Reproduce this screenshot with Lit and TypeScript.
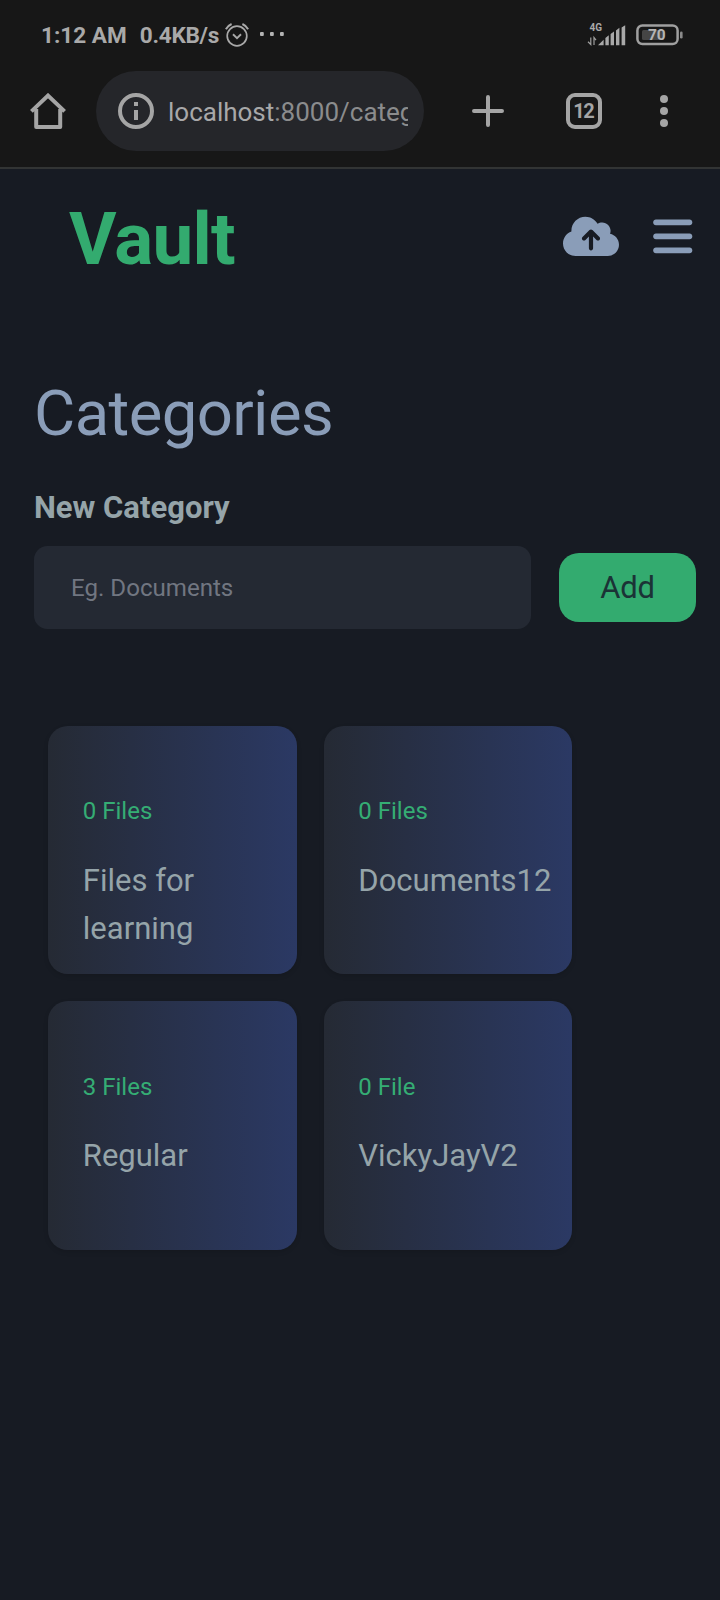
import { LitElement, html, css } from "lit";
import { customElement, property } from "lit/decorators.js";

@customElement("status-bar")
class StatusBar extends LitElement {
  static styles = css`
    :host { display: flex; align-items: center; height: 70px; padding: 0 37px 0 41px; color: #a9a9a9; }
    .time, .rate { padding-top: 1px; font-weight: 700; font-size: 22.6px; line-height: 30px; white-space: pre; }
    .rate { margin-left: 13px; letter-spacing: -0.3px; }
    .alarm { margin-left: 6px; }
    .more { margin-left: 10px; }
    .spacer { flex: 1; }
    .signal { margin-right: 10px; }
    svg { display: block; flex: none; }
    .tiny { font: 700 10px Roboto, sans-serif; }
    .level { font: 700 15.5px Roboto, sans-serif; }
  `;
  render() {
    return html`
      <span class="time">1:12 AM</span>
      <span class="rate">0.4KB/s</span>
      <svg class="alarm" width="24" height="26" viewBox="0 0 24 26" fill="none" stroke="#a9a9a9" stroke-width="1.7">
        <circle cx="12" cy="14" r="9.8" />
        <path d="M.9 7.200A12 12 0 0 1 6.600 2M23.100 7.200A12 12 0 0 0 17.400 2" stroke-width="2" />
        <path d="M8 12.300l4 3.800 4-3.800" stroke-width="1.9" />
      </svg>
      <svg class="more" width="26" height="6" viewBox="0 0 26 6" fill="#b4b4b4">
        <rect x="1" y="0" width="3.8" height="4" rx="1" /><rect x="11" y="0" width="3.8" height="4" rx="1" /><rect x="21" y="0" width="3.8" height="4" rx="1" />
      </svg>
      <span class="spacer"></span>
      <svg class="signal" width="39" height="24" viewBox="0 0 39 24" fill="#a9a9a9">
        <text class="tiny" x="2.6" y="8.2">4G</text>
        <path d="M3.800 14.500V21.500L1 18.800M7 22v-7.500L9 17.200" fill="none" stroke="#a0a0a0" stroke-width="1.2" />
        <path d="M11 22.200h5.600v-5.400z" />
        <path d="M18.400 22.200V15l3.400-2.800v10zM23.600 22.200V11l3.400-2.400v13.600zM29 22.200V7.400l3.400-2.600v17.400zM34.600 22.200V4.400l3.600-2.200v20z" />
      </svg>
      <svg width="47" height="22" viewBox="0 0 47 22">
        <rect x="1.4" y="1.4" width="40.2" height="18.6" rx="5" fill="none" stroke="#a0a0a0" stroke-width="2.5" />
        <rect x="6" y="6" width="22" height="10" rx="1.5" fill="#454545" />
        <rect x="44" y="7.5" width="2.6" height="7" rx="1.3" fill="#8a8a8a" />
        <text class="level" x="20.8" y="16.2" text-anchor="middle" fill="#b4b4b4">70</text>
      </svg>
    `;
  }
}

@customElement("browser-bar")
class BrowserBar extends LitElement {
  static styles = css`
    :host { display: flex; align-items: center; height: 80px; padding: 1px 48px 16px 30px; border-bottom: 2px solid #323434; color: #a5a5a5; }
    svg { display: block; flex: none; }
    .pill { display: flex; align-items: center; box-sizing: border-box; width: 328px; height: 80px; margin-left: 30px; padding: 0 16px 0 22px; border-radius: 40px; background: #25262a; }
    .url { margin-left: 14px; padding-top: 2px; flex: 1; overflow: hidden; white-space: nowrap; font-size: 26px; line-height: 40px; color: #8b8c8d; }
    .host { color: #a8a8a9; }
    .plus { margin-left: 48px; }
    .tabs { display: grid; place-items: center; box-sizing: border-box; width: 36px; height: 36px; margin-left: 62px; border: 4px solid #a5a5a5; border-radius: 9px; font-weight: 700; font-size: 20px; line-height: 28px; letter-spacing: -1.6px; text-indent: -1.6px; }
    .menu { margin-left: 58px; }
  `;
  render() {
    return html`
      <svg width="36" height="36" viewBox="0 0 36 36" fill="none" stroke="#a5a5a5" stroke-width="4" stroke-linejoin="round">
        <path d="M6.200 16v18h24V16" />
        <path d="M1.400 18.400L18 2.600l16.600 15.800" stroke-linejoin="miter" />
      </svg>
      <div class="pill">
        <svg width="36" height="36" viewBox="0 0 36 36">
          <circle cx="18" cy="18" r="16" fill="none" stroke="#a5a5a5" stroke-width="4" />
          <path d="M16 9h4v4h-4zM16 17h4v10h-4z" fill="#a5a5a5" />
        </svg>
        <div class="url"><span class="host">localhost</span>:8000/categories</div>
      </div>
      <svg class="plus" width="32" height="32" viewBox="0 0 32 32" stroke="#a5a5a5" stroke-width="4" stroke-linecap="round">
        <path d="M16 2v28M2 16h28" />
      </svg>
      <div class="tabs">12</div>
      <svg class="menu" width="8" height="32" viewBox="0 0 8 32" fill="#a5a5a5">
        <circle cx="4" cy="4" r="4" /><circle cx="4" cy="16" r="4" /><circle cx="4" cy="28" r="4" />
      </svg>
    `;
  }
}

@customElement("vault-header")
class VaultHeader extends LitElement {
  static styles = css`
    :host { display: flex; align-items: center; height: 135px; padding: 0 27.2px 0 69px; }
    .brand { flex: 1; padding-top: 5px; font-weight: 700; font-size: 72.8px; line-height: 80px; letter-spacing: -0.7px; color: #33ab6f; }
    svg { display: block; fill: #8a9db8; }
    .bars { margin-left: 34.3px; }
  `;
  render() {
    return html`
      <div class="brand">Vault</div>
      <svg width="56" height="44.8" viewBox="0 0 640 512"><path d="M144 480C64.500 480 0 415.500 0 336c0-62.800 40.200-116.200 96.200-135.900c-.1-2.700-.2-5.400-.2-8.100c0-88.400 71.600-160 160-160c59.300 0 111 32.200 138.700 80.200C409.900 102 428.300 96 448 96c53 0 96 43 96 96c0 12.200-2.300 23.800-6.400 34.600C596 238.400 640 290.100 640 352c0 70.700-57.300 128-128 128H144zm79-217c-9.400 9.400-9.400 24.600 0 33.900s24.600 9.400 33.900 0l39-39V392c0 13.300 10.700 24 24 24s24-10.700 24-24V257.900l39 39c9.400 9.400 24.600 9.400 33.900 0s9.400-24.600 0-33.900l-80-80c-9.400-9.400-24.600-9.400-33.900 0l-80 80z" /></svg>
      <svg class="bars" width="39.5" height="44.8" viewBox="0 0 448 512"><path d="M0 96C0 78.300 14.300 64 32 64H416c17.700 0 32 14.300 32 32s-14.300 32-32 32H32C14.300 128 0 113.700 0 96zM0 256c0-17.700 14.300-32 32-32H416c17.700 0 32 14.300 32 32s-14.300 32-32 32H32c-17.700 0-32-14.300-32-32zM448 416c0 17.700-14.300 32-32 32H32c-17.700 0-32-14.300-32-32s14.300-32 32-32H416c17.700 0 32 14.300 32 32z" /></svg>
    `;
  }
}

@customElement("category-card")
class CategoryCard extends LitElement {
  @property({ type: Number }) files = 0;
  @property() unit = "Files";
  @property() name = "";
  static styles = css`
    :host { display: block; box-sizing: border-box; height: 248.4px; padding: 68.2px 10px 0 34.8px; border-radius: 20px; background: linear-gradient(to right, #252a34, #2b3964); box-shadow: 0 2px 5px rgba(0, 0, 0, 0.12); }
    .count { font-size: 24px; line-height: 34px; color: #35ad74; }
    .name { width: 150px; margin-top: 28.8px; font-size: 31px; line-height: 48px; color: #95a4a9; }
  `;
  render() {
    return html`<div class="count">${this.files} ${this.unit}</div><div class="name">${this.name}</div>`;
  }
}

@customElement("app-root")
class AppRoot extends LitElement {
  private categories = [
    { files: 0, unit: "Files", name: "Files for learning" },
    { files: 0, unit: "Files", name: "Documents12" },
    { files: 3, unit: "Files", name: "Regular" },
    { files: 0, unit: "File", name: "VickyJayV2" },
  ];
  static styles = css`
    :host { display: block; height: 1600px; overflow: hidden; background: #171b23; font-family: Roboto, sans-serif; }
    .chrome { background: #171717; }
    .content { padding: 0 24px 0 34px; }
    .title { margin: 73px 0 0; font-weight: 400; font-size: 63.4px; line-height: 72px; letter-spacing: -0.6px; color: #8a9db8; }
    .label { display: block; margin-top: 35px; font-weight: 700; font-size: 31px; line-height: 48px; color: #95a4a9; }
    .form { display: flex; align-items: center; gap: 28px; margin-top: 14px; }
    .field { box-sizing: border-box; width: 497px; height: 83px; padding: 0 37px; border: 0; border-radius: 13.5px; outline: 0; background: #242933; font: 400 24.1px Roboto, sans-serif; }
    .field::placeholder { color: #717681; opacity: 1; }
    .add { flex: 1; height: 69px; padding: 0 0 1px; border: 0; border-radius: 20px; background: #33ab6f; color: #1b3336; font: 400 31px Roboto, sans-serif; letter-spacing: -0.3px; }
    .grid { display: grid; grid-template-columns: 248.5px 248.5px; gap: 27px; margin: 97px 0 0 14px; }
  `;
  render() {
    return html`
      <div class="chrome"><status-bar></status-bar><browser-bar></browser-bar></div>
      <vault-header></vault-header>
      <main class="content">
        <h1 class="title">Categories</h1>
        <label class="label" for="category">New Category</label>
        <div class="form">
          <input class="field" id="category" placeholder="Eg. Documents" />
          <button class="add">Add</button>
        </div>
        <div class="grid">
          ${this.categories.map((c) => html`<category-card .files=${c.files} .unit=${c.unit} .name=${c.name}></category-card>`)}
        </div>
      </main>
    `;
  }
}
